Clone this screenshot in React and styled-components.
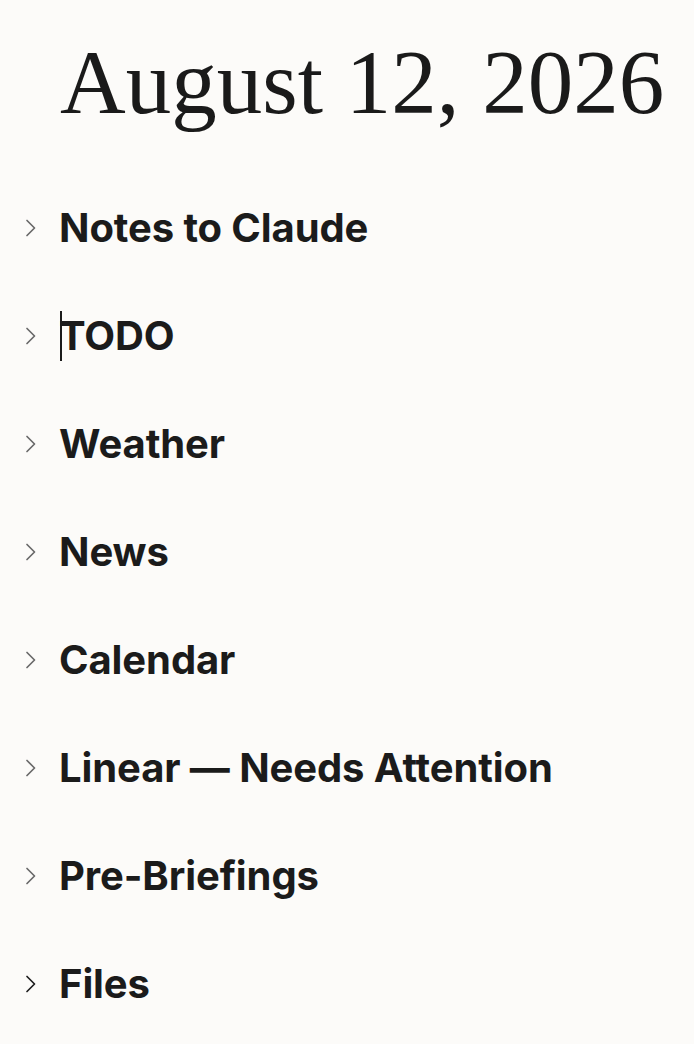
import React from 'react';
import styled, { createGlobalStyle } from 'styled-components';

const GlobalStyle = createGlobalStyle`
  html, body {
    margin: 0;
    padding: 0;
    background: #fcfbf9;
  }
  body {
    font-family: Inter, "Noto Sans", sans-serif;
    color: #1b1b1b;
  }
`;

const Page = styled.main`
  display: flex;
  flex-direction: column;
  padding: 28px 0 0 0;
`;

const Title = styled.h1`
  margin: 0 0 0 60px;
  font-family: "Liberation Serif", "DejaVu Serif", serif;
  font-weight: 400;
  font-size: 91px;
  line-height: 110px;
  color: #1a1a1a;
  white-space: nowrap;
`;

const Sections = styled.div`
  display: flex;
  flex-direction: column;
  margin-top: 36px;
`;

const Row = styled.div`
  display: flex;
  align-items: center;
  height: 108px;
`;

const Toggle = styled.span`
  width: 59px;
  display: flex;
  padding-left: 25px;
  box-sizing: border-box;
  color: ${p => (p.active ? '#1e1e1e' : '#6a6a6a')};
`;

const Heading = styled.h2`
  position: relative;
  margin: 0;
  font-size: 40px;
  font-weight: 700;
  letter-spacing: -0.1px;
  line-height: 50px;
  color: #1b1b1b;
`;

const Caret = styled.span`
  position: absolute;
  left: 1px;
  top: 0;
  width: 1.5px;
  height: 50px;
  background: #1b1b1b;
`;

const Chevron = () => (
  <svg width="12" height="18" viewBox="0 0 12 18" fill="none">
    <path
      d="M2 1.5l7.5 7.5-7.5 7.5"
      stroke="currentColor"
      strokeWidth="1.7"
      strokeLinecap="round"
      strokeLinejoin="round"
    />
  </svg>
);

const sections = [
  'Notes to Claude',
  'TODO',
  'Weather',
  'News',
  'Calendar',
  'Linear — Needs Attention',
  'Pre-Briefings',
  'Files',
];

export default function App() {
  return (
    <>
      <GlobalStyle />
      <Page>
        <Title>August 12, 2026</Title>
        <Sections>
          {sections.map((name, i) => (
            <Row key={name}>
              <Toggle active={i === sections.length - 1}>
                <Chevron />
              </Toggle>
              <Heading>
                {name === 'TODO' && <Caret />}
                {name}
              </Heading>
            </Row>
          ))}
        </Sections>
      </Page>
    </>
  );
}
